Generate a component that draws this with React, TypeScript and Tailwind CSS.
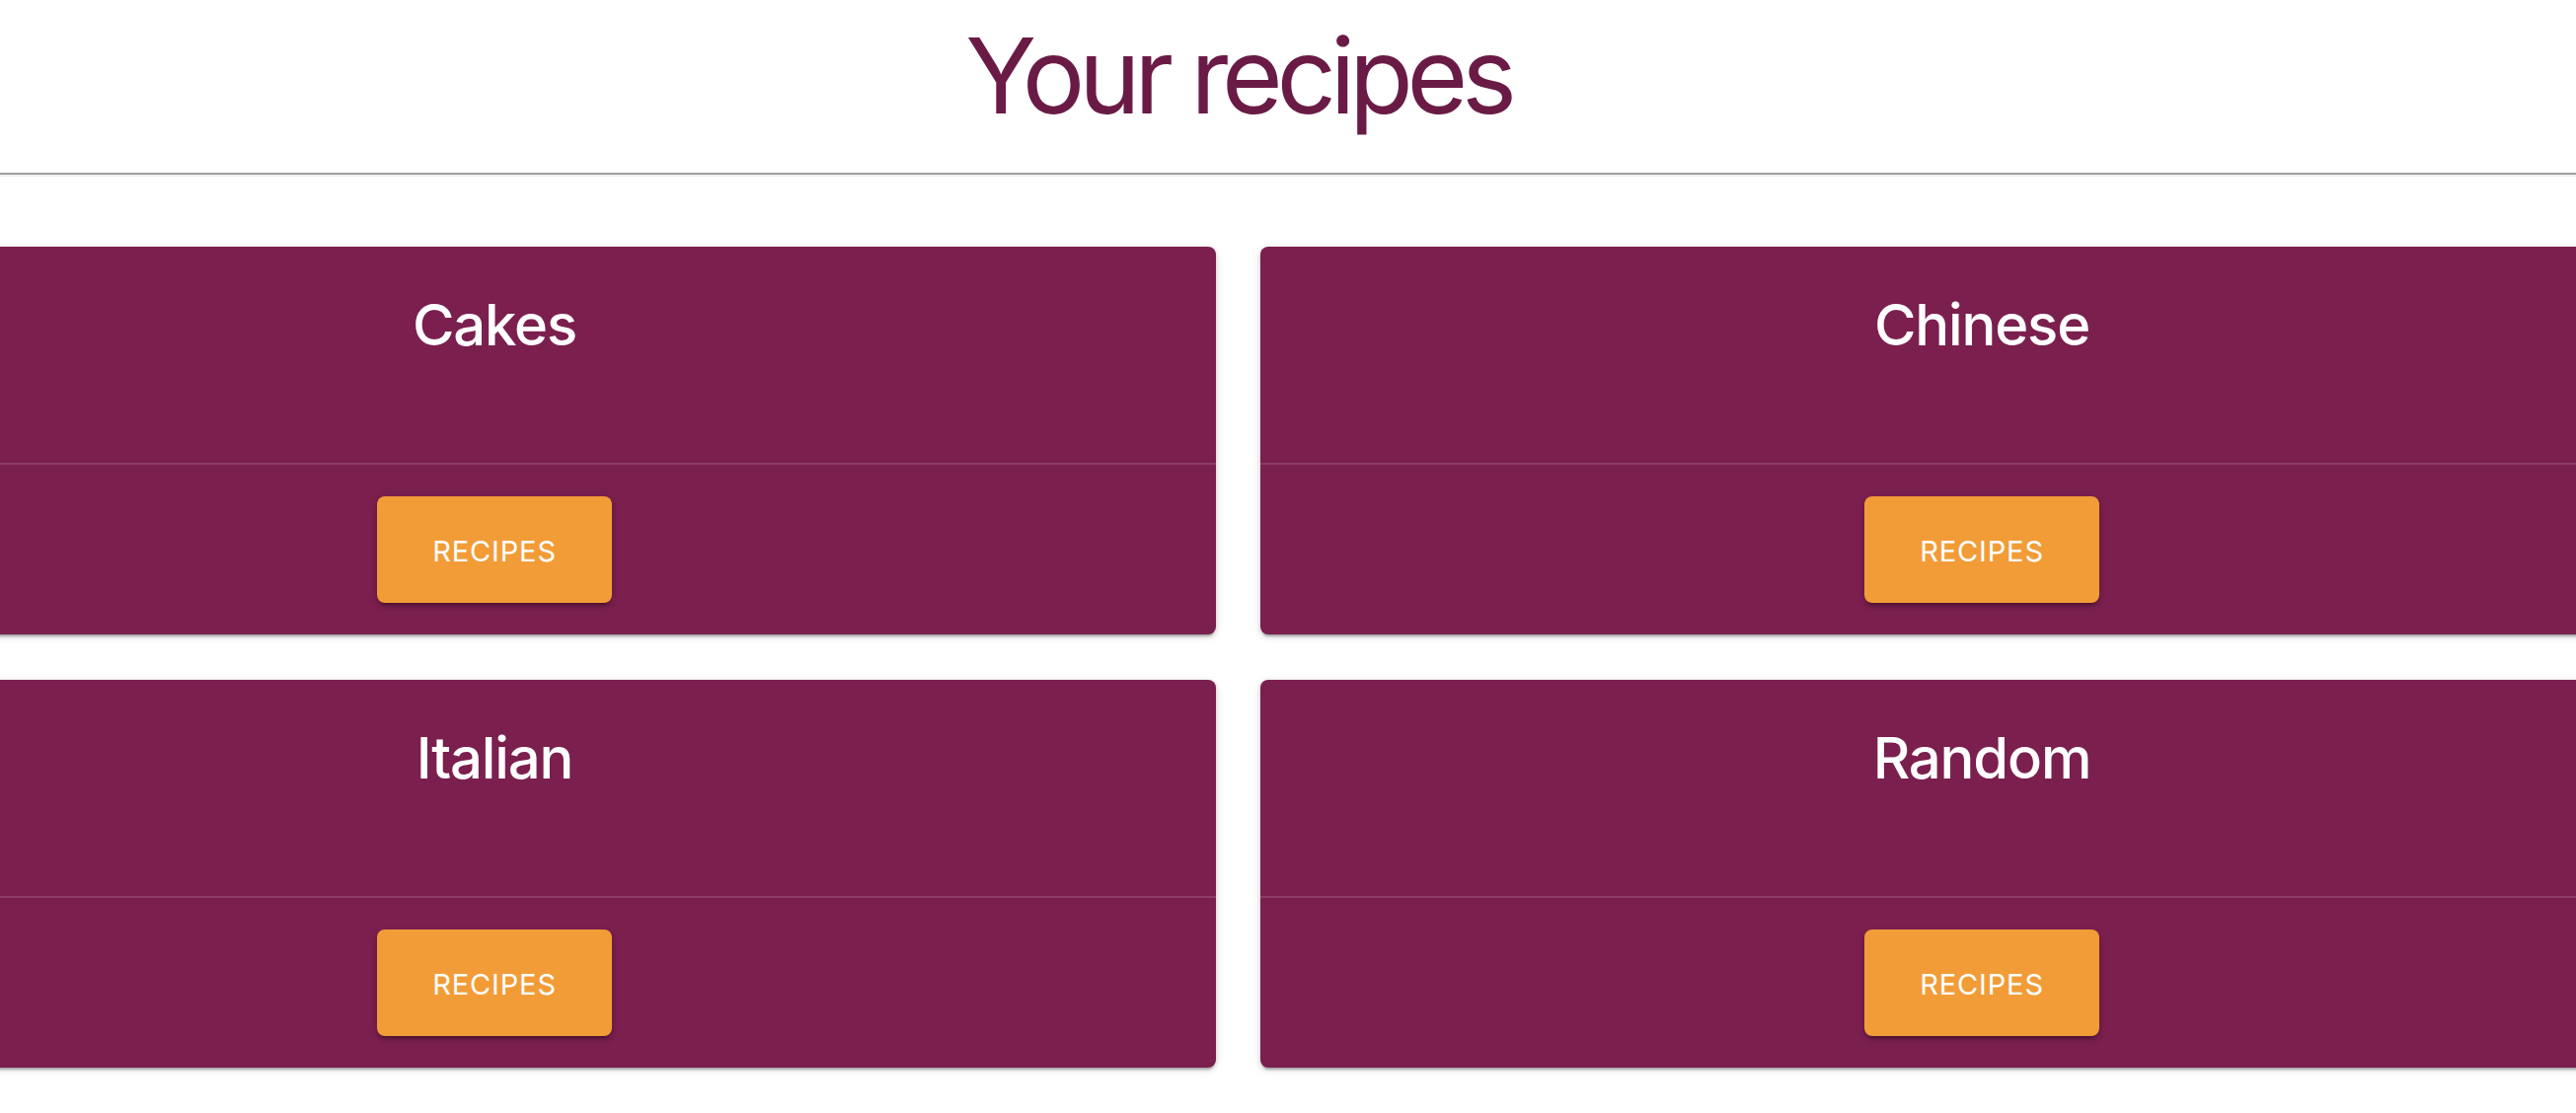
import React from "react";

const categories = ["Cakes", "Chinese", "Italian", "Random"];

function CategoryCard({ name }: { name: string }) {
  return (
    <div className="bg-[#7b1f4e] rounded-[8px] shadow-[0_4px_2px_-2px_rgba(0,0,0,0.2),0_2px_4px_0_rgba(0,0,0,0.14),0_2px_10px_0_rgba(0,0,0,0.12)] overflow-hidden">
      {/* Card content */}
      <div className="h-[219px] pt-[45px] text-center">
        <h2 className="text-[58px] leading-[1.2] font-medium text-white tracking-[-0.02em]">{name}</h2>
      </div>
      <div className="h-[2px] bg-[#8d3c65]" />
      {/* Card actions */}
      <div className="flex justify-center py-[32px]">
        <button
          type="button"
          className="w-[238px] h-[108px] pt-[3px] rounded-[8px] bg-[#f29c38] text-white text-[29px] font-normal uppercase tracking-[0.03em] shadow-[0_6px_2px_-4px_rgba(0,0,0,0.2),0_4px_4px_0_rgba(0,0,0,0.14),0_2px_10px_0_rgba(0,0,0,0.12)]"
        >
          Recipes
        </button>
      </div>
    </div>
  );
}

export default function App() {
  return (
    <div className="min-h-screen bg-white overflow-hidden font-['Inter',sans-serif]">
      <div className="w-[2969px] -ml-[230px] pt-[13px] text-center">
        <h1 className="text-[106px] leading-[1.2] font-normal text-[#6a1b45] tracking-[-0.06em]">Your recipes</h1>
      </div>
      <div className="mt-[35px] border-t-2 border-b-2 border-t-[#9e9e9e] border-b-[#eeeeee]" />
      <div className="w-[2969px] -ml-[230px] mt-[71px] grid grid-cols-2 gap-x-[45px] gap-y-[46px]">
        {categories.map((c) => (
          <CategoryCard key={c} name={c} />
        ))}
      </div>
    </div>
  );
}
